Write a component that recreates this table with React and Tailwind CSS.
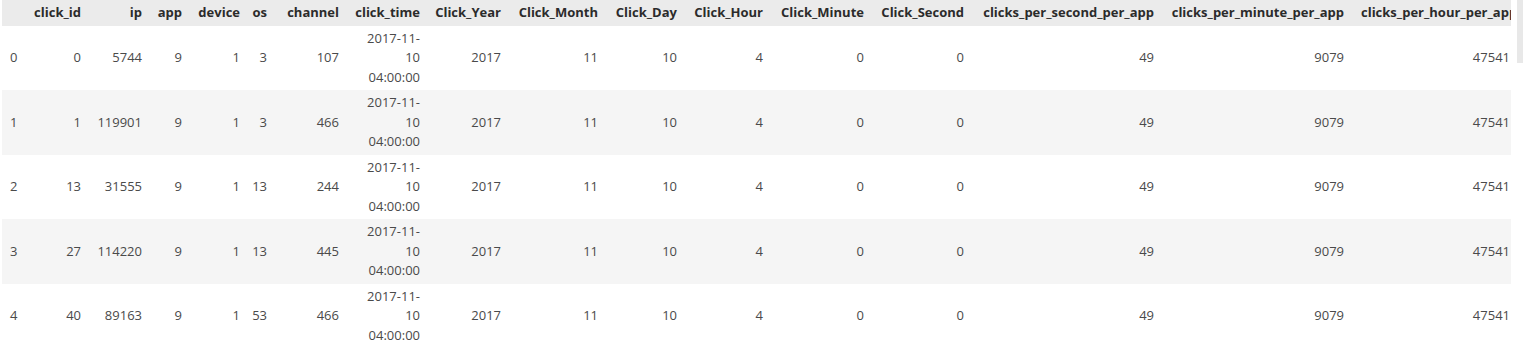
import React from 'react';

const columns = [
  { key: 'idx', label: '', width: 'w-[24px]' },
  { key: 'click_id', label: 'click_id', width: 'w-[61px]' },
  { key: 'ip', label: 'ip', width: 'w-[61px]' },
  { key: 'app', label: 'app', width: 'w-[40px]' },
  { key: 'device', label: 'device', width: 'w-[58px]' },
  { key: 'os', label: 'os', width: 'w-[27px]' },
  { key: 'channel', label: 'channel', width: 'w-[72px]' },
  { key: 'click_time', label: 'click_time', width: 'w-[81px]' },
  { key: 'year', label: 'Click_Year', width: 'w-[81px]' },
  { key: 'month', label: 'Click_Month', width: 'w-[97px]' },
  { key: 'day', label: 'Click_Day', width: 'w-[79px]' },
  { key: 'hour', label: 'Click_Hour', width: 'w-[86px]' },
  { key: 'minute', label: 'Click_Minute', width: 'w-[101px]' },
  { key: 'second', label: 'Click_Second', width: 'w-[100px]' },
  { key: 'cps', label: 'clicks_per_second_per_app', width: 'w-[190px]' },
  { key: 'cpm', label: 'clicks_per_minute_per_app', width: 'w-[190px]' },
  { key: 'cph', label: 'clicks_per_hour_per_app', width: 'w-[166px]' },
];

const rows = [
  [0, 0, 5744, 9, 1, 3, 107],
  [1, 1, 119901, 9, 1, 3, 466],
  [2, 13, 31555, 9, 1, 13, 244],
  [3, 27, 114220, 9, 1, 13, 445],
  [4, 40, 89163, 9, 1, 53, 466],
];

// same for every row
const tail = [2017, 11, 10, 4, 0, 0, 49, 9079, 47541];

function Cell({ children }) {
  return (
    <td className="px-[6px] py-[3px] text-right align-middle whitespace-nowrap">{children}</td>
  );
}

export default function App() {
  return (
    <div
      className="flex bg-white pl-[2px] text-[13px] leading-normal"
      style={{ fontFamily: '"Open Sans", "Noto Sans", sans-serif' }}
    >
      <div className="w-[1509px] overflow-hidden">
        <table className="table-fixed border-collapse w-[1514px]">
          <colgroup>
            {columns.map((c) => (
              <col key={c.key} className={c.width} />
            ))}
          </colgroup>
          <thead>
            <tr className="bg-[#ebebeb] text-[#2b2b2b]">
              {columns.map((c, i) => (
                <th
                  key={c.key}
                  className={
                    i === columns.length - 1
                      ? 'pl-[11px] pr-[6px] py-[3px] text-left font-bold whitespace-nowrap overflow-visible'
                      : 'px-[6px] py-[3px] text-right font-bold whitespace-nowrap'
                  }
                >
                  {c.label}
                </th>
              ))}
            </tr>
          </thead>
          <tbody className="text-[#4a4a4a]">
            {rows.map((r, i) => (
              <tr key={r[0]} className={i % 2 === 1 ? 'bg-[#f5f5f5]' : 'bg-white'}>
                <td className="px-[8px] py-[3px] text-left align-middle">{r[0]}</td>
                {r.slice(1).map((v, j) => (
                  <Cell key={j}>{v}</Cell>
                ))}
                <td className="px-[6px] py-[3px] text-right align-middle">
                  2017-11-
                  <br />
                  10
                  <br />
                  04:00:00
                </td>
                {tail.map((v, j) => (
                  <Cell key={'t' + j}>{v}</Cell>
                ))}
              </tr>
            ))}
          </tbody>
        </table>
      </div>
      <div className="ml-[6px] w-[6px]">
        <div className="h-[63px] bg-[#e8e8e8]" />
      </div>
    </div>
  );
}
